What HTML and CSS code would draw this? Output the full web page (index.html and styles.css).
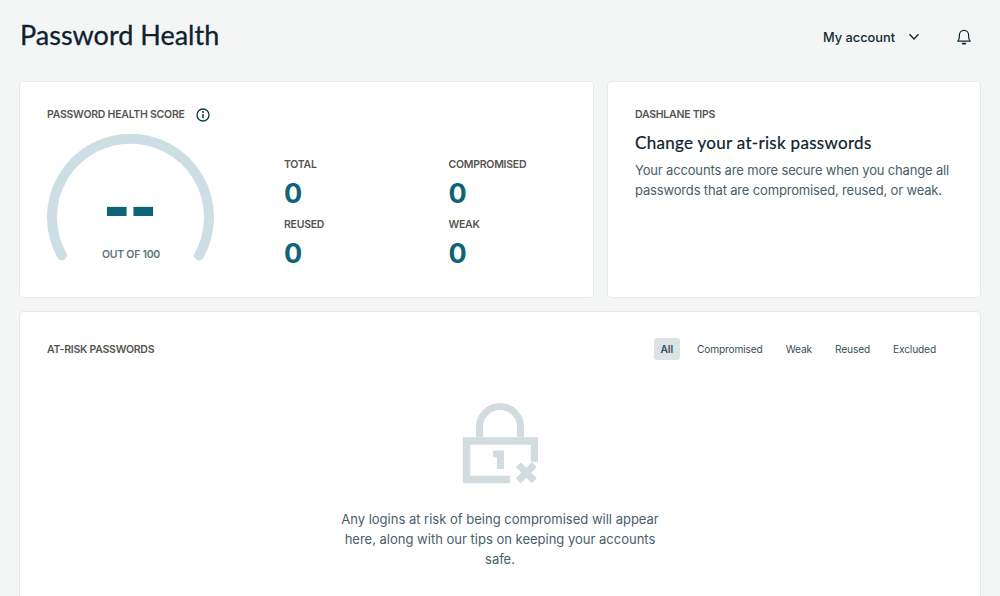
FILE: index.html
```html
<!DOCTYPE html>
<html lang="en">
<head>
    <meta charset="UTF-8">
    <meta name="viewport" content="width=device-width, initial-scale=1.0">
    <title>Password Health</title>
    <link rel="stylesheet" href="styles.css">
</head>
<body>

<header class="topbar">
    <h1 class="page-title">Password Health</h1>
    <div class="account">
        <span class="account-name">My account</span>
        <svg class="chevron" width="12" height="8" viewBox="0 0 12 8"><path d="M1.500 1.200 6 6l4.500-4.800" fill="none" stroke="#0e2a33" stroke-width="1.400"/></svg>
        <svg class="bell" width="16" height="18" viewBox="0 0 16 18"><path d="M1.800 13.200c1.200-1.200 1.600-2.400 1.600-4.400V7a4.600 4.600 0 0 1 9.200 0v1.800c0 2 .4 3.200 1.600 4.400z" fill="none" stroke="#0e2a33" stroke-width="1.200" stroke-linejoin="round"/><path d="M6.500 15.600h3" stroke="#0e2a33" stroke-width="1.600" stroke-linecap="round"/></svg>
    </div>
</header>

<main class="content">
    <div class="top-row">
        <section class="card score-card">
            <div class="label score-title">
                <span>Password Health Score</span>
                <svg width="14" height="14" viewBox="0 0 14 14"><circle cx="7" cy="7" r="6" fill="none" stroke="#0e3a40" stroke-width="1.300"/><path d="M7 6v4.200" stroke="#0e3a40" stroke-width="1.500"/><circle cx="7" cy="4" r="1" fill="#0e3a40"/></svg>
            </div>
            <div class="score-body">
                <div class="gauge">
                    <svg width="168" height="130" viewBox="0 0 168 130"><path d="M15 122.500A78.500 78.500 0 1 1 152 122.500" fill="none" stroke="#cddfe4" stroke-width="10" stroke-linecap="round"/></svg>
                    <div class="gauge-value">--</div>
                    <div class="gauge-caption">Out of 100</div>
                </div>
                <div class="stats">
                    <div class="stat"><div class="label">Total</div><div class="stat-value">0</div></div>
                    <div class="stat"><div class="label">Compromised</div><div class="stat-value">0</div></div>
                    <div class="stat"><div class="label">Reused</div><div class="stat-value">0</div></div>
                    <div class="stat"><div class="label">Weak</div><div class="stat-value">0</div></div>
                </div>
            </div>
        </section>

        <section class="card tips-card">
            <div class="label">Dashlane Tips</div>
            <h2 class="tips-title">Change your at-risk passwords</h2>
            <p class="tips-text">Your accounts are more secure when you change all passwords that are compromised, reused, or weak.</p>
        </section>
    </div>

    <section class="card risk-card">
        <div class="risk-head">
            <div class="label risk-title">At-risk passwords</div>
            <nav class="filters">
                <span class="filter active">All</span>
                <span class="filter">Compromised</span>
                <span class="filter">Weak</span>
                <span class="filter">Reused</span>
                <span class="filter">Excluded</span>
            </nav>
        </div>
        <div class="empty">
            <svg width="76" height="82" viewBox="0 0 76 82">
                <path d="M17.500 34V24A20.500 20.500 0 0 1 58.500 24V34" fill="none" stroke="#d2dcdf" stroke-width="7"/>
                <path d="M48 76.500H4.500V38H72.500V58.700" fill="none" stroke="#d2dcdf" stroke-width="7.500"/>
                <path d="M31 51H38.500V66" fill="none" stroke="#d2dcdf" stroke-width="7"/>
                <path d="M56.300 61.700 72.300 77.700M72.300 61.700 56.300 77.700" fill="none" stroke="#d2dcdf" stroke-width="7"/>
            </svg>
            <p class="empty-text">Any logins at risk of being compromised will appear here, along with our tips on keeping your accounts safe.</p>
        </div>
    </section>
</main>

</body>
</html>
```

FILE: styles.css
```css
html, body {
    height: 100%;
    overflow: hidden;
}
body {
    font-family: Inter, "Liberation Sans", sans-serif;
    margin: 0;
    background-color: #f4f6f5;
    color: #0e2a33;
}
.topbar {
    display: flex;
    justify-content: space-between;
    align-items: center;
    height: 72px;
    padding: 0 28px 0 20px;
}
.page-title {
    margin: -4px 0 0;
    font-family: Lato, sans-serif;
    font-size: 27px;
    font-weight: 400;
    -webkit-text-stroke: 0.3px #0e2230;
    color: #0e2230;
}
.account {
    display: flex;
    align-items: center;
    margin-top: 2px;
}
.account-name {
    font-size: 12.800px;
    font-weight: 500;
}
.chevron {
    margin-left: 13px;
}
.bell {
    margin-left: 36px;
}
.content {
    padding: 9px 19px 0 19px;
}
.top-row {
    display: grid;
    grid-template-columns: 575px 1fr;
    gap: 13px;
}
.card {
    background: #fff;
    border: 1px solid #e6eae9;
    border-radius: 4px;
}
.label {
    font-size: 10.500px;
    font-weight: 600;
    line-height: 14px;
    letter-spacing: -0.25px;
    text-transform: uppercase;
    color: #55554f;
}
.score-card {
    height: 217px;
    box-sizing: border-box;
    padding: 26px 27px 0;
}
.score-title {
    display: flex;
    align-items: center;
    gap: 11px;
}
.score-body {
    display: flex;
    margin-top: 11px;
}
.gauge {
    position: relative;
    width: 168px;
    height: 130px;
}
.gauge-value {
    position: absolute;
    left: -2px;
    right: 0;
    top: 38px;
    text-align: center;
    font-family: "DejaVu Sans", sans-serif;
    font-size: 64px;
    font-weight: 700;
    line-height: 74px;
    color: #0e6476;
}
.gauge-caption {
    position: absolute;
    left: 0;
    right: 0;
    top: 115px;
    text-align: center;
    font-size: 10.500px;
    font-weight: 600;
    letter-spacing: -0.25px;
    text-transform: uppercase;
    color: #5f7680;
}
.stats {
    display: grid;
    grid-template-columns: 164.500px 1fr;
    grid-auto-rows: 60px;
    margin: 25px 0 0 69px;
    flex: 1;
}
.stat-value {
    margin-top: 4px;
    font-size: 27px;
    font-weight: 700;
    line-height: 36px;
    color: #0e6476;
}
.tips-card {
    padding: 26px 20px 0 27px;
}
.tips-title {
    margin: 9px 0 0;
    font-family: Lato, sans-serif;
    font-size: 17px;
    font-weight: 400;
    line-height: 24px;
    letter-spacing: 0.3px;
    -webkit-text-stroke: 0.2px #0e2230;
    color: #0e2230;
}
.tips-text {
    margin: 5px 0 0;
    font-size: 13px;
    line-height: 20px;
    letter-spacing: -0.16px;
    color: #47606a;
}
.risk-card {
    margin-top: 13px;
    height: 320px;
    padding: 0 27px;
}
.risk-head {
    display: flex;
    justify-content: space-between;
    align-items: center;
    padding-top: 26px;
}
.risk-title {
    margin-top: 2px;
}
.filters {
    display: flex;
    align-items: center;
    gap: 11px;
    margin-right: 11px;
}
.filter {
    padding: 0 6px;
    font-size: 10.200px;
    letter-spacing: -0.15px;
    line-height: 22px;
    color: #33505c;
}
.filter.active {
    padding: 0 7px;
    background: #dde3e5;
    border-radius: 3px;
    font-weight: 600;
}
.empty {
    display: flex;
    flex-direction: column;
    align-items: center;
    margin-top: 43px;
}
.empty-text {
    width: 340px;
    margin: 24px 0 0;
    text-align: center;
    font-size: 13px;
    line-height: 20px;
    color: #47606a;
}
```
